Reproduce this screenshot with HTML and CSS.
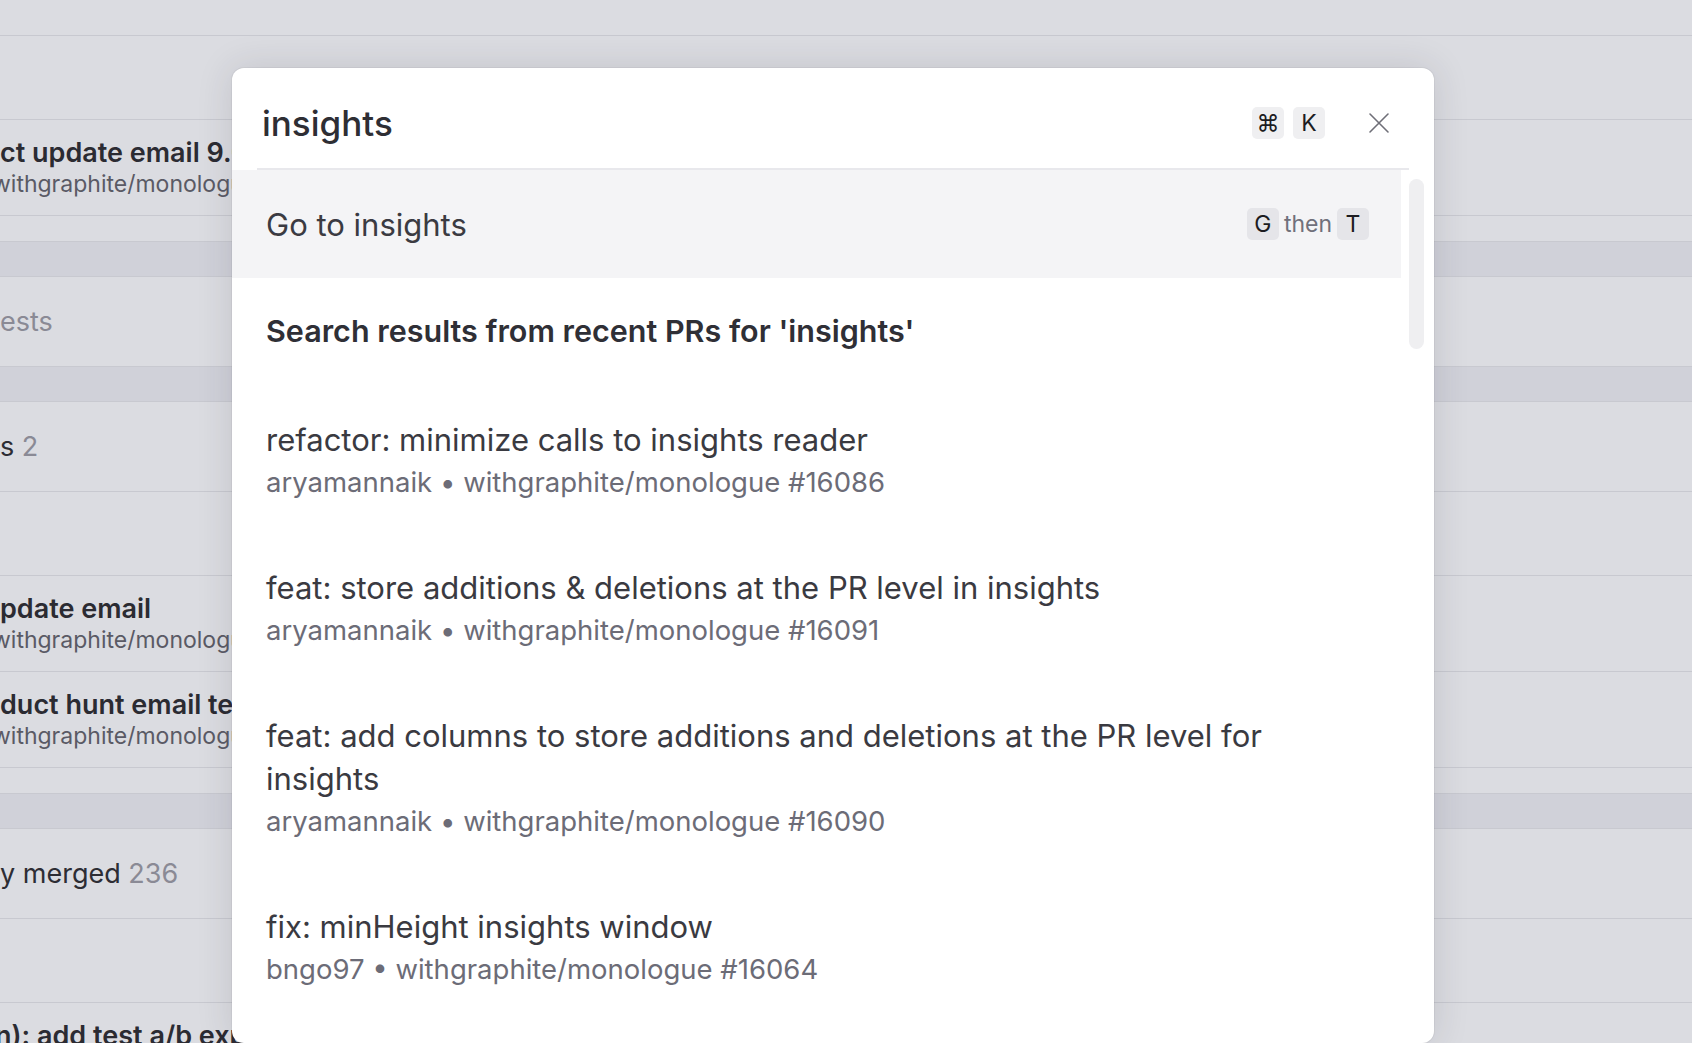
FILE: index.html
```html
<!DOCTYPE html>
<html lang="en">
<head>
    <meta charset="UTF-8">
    <meta name="viewport" content="width=device-width, initial-scale=1.0">
    <title>Inbox - Command menu</title>
    <link rel="stylesheet" href="styles.css">
</head>
<body>
    <!-- page behind the dimmed overlay -->
    <div class="page">
        <div class="bg-row bg-top"></div>
        <div class="bg-row bg-empty"></div>
        <div class="bg-row bg-pr">
            <span class="bg-title">ct update email 9.0</span>
            <span class="bg-sub cut">withgraphite/monologue</span>
        </div>
        <div class="bg-spacer"></div>
        <div class="bg-band"></div>
        <div class="bg-row bg-section"><span class="muted">ests</span></div>
        <div class="bg-band"></div>
        <div class="bg-row bg-section"><span>s <span class="muted">2</span></span></div>
        <div class="bg-row bg-empty"></div>
        <div class="bg-row bg-pr">
            <span class="bg-title">pdate email</span>
            <span class="bg-sub cut">withgraphite/monologue</span>
        </div>
        <div class="bg-row bg-pr">
            <span class="bg-title">duct hunt email test</span>
            <span class="bg-sub cut">withgraphite/monologue</span>
        </div>
        <div class="bg-spacer"></div>
        <div class="bg-band"></div>
        <div class="bg-row bg-section"><span>y merged <span class="muted">236</span></span></div>
        <div class="bg-row bg-empty"></div>
        <div class="bg-row bg-pr">
            <span class="bg-title cut-n">n): add test a/b experiment</span>
            <span class="bg-sub cut">withgraphite/monologue</span>
        </div>
    </div>

    <div class="overlay">
        <div class="cmdk">
            <div class="cmdk-head">
                <div class="cmdk-input">insights</div>
                <div class="keys">
                    <span class="kbd">&#8984;</span>
                    <span class="kbd">K</span>
                </div>
                <button class="close" aria-label="Close">
                    <svg width="22" height="22" viewBox="0 0 22 22" fill="none" stroke="#6f6f78" stroke-width="1.6" stroke-linecap="round">
                        <path d="M2 2 L20 20 M20 2 L2 20"/>
                    </svg>
                </button>
            </div>

            <div class="cmdk-body">
                <div class="cmdk-list">
                    <div class="cmdk-go">
                        <span>Go to insights</span>
                        <span class="shortcut">
                            <span class="kbd dark">G</span>
                            <span class="then">then</span>
                            <span class="kbd dark">T</span>
                        </span>
                    </div>

                    <div class="cmdk-group">Search results from recent PRs for 'insights'</div>

                    <div class="cmdk-item">
                        <div class="item-title">refactor: minimize calls to insights reader</div>
                        <div class="item-meta">aryamannaik &bull; withgraphite/monologue #16086</div>
                    </div>
                    <div class="cmdk-item">
                        <div class="item-title">feat: store additions &amp; deletions at the PR level in insights</div>
                        <div class="item-meta">aryamannaik &bull; withgraphite/monologue #16091</div>
                    </div>
                    <div class="cmdk-item">
                        <div class="item-title">feat: add columns to store additions and deletions at the PR level for insights</div>
                        <div class="item-meta">aryamannaik &bull; withgraphite/monologue #16090</div>
                    </div>
                    <div class="cmdk-item">
                        <div class="item-title">fix: minHeight insights window</div>
                        <div class="item-meta">bngo97 &bull; withgraphite/monologue #16064</div>
                    </div>
                </div>
                <div class="scroll-track">
                    <div class="scroll-thumb"></div>
                </div>
            </div>
        </div>
    </div>
</body>
</html>
```

FILE: styles.css
```css
body {
    font-family: Inter, "Noto Sans", sans-serif;
    margin: 0;
    padding: 0;
    background-color: #dbdce1;
    height: 1043px;
    overflow: hidden;
}

/* background page (already dimmed) */
.page {
    width: 100%;
}

.bg-row {
    box-sizing: border-box;
    border-bottom: 1px solid #c8c9d0;
    display: flex;
    flex-direction: column;
    justify-content: center;
    white-space: nowrap;
    overflow: hidden;
}

.bg-top { height: 36px; }
.bg-empty { height: 84px; }
.bg-pr { height: 96px; }
.bg-section {
    height: 90px;
    font-size: 27px;
    color: #2d2d34;
}

.bg-spacer {
    height: 25px;
    border-bottom: 1px solid #c8c9d0;
}

.bg-band {
    box-sizing: border-box;
    height: 35px;
    background-color: #d0d1d9;
    border-bottom: 1px solid #c8c9d0;
}

.bg-title {
    font-size: 27px;
    font-weight: 600;
    color: #2b2b32;
    line-height: 32px;
}

.bg-sub {
    font-size: 23px;
    color: #5a5a65;
    line-height: 30px;
}

.bg-sub.cut { margin-left: -8px; }
.bg-title.cut-n { margin-left: -5px; }

.muted { color: #8a8a95; }

/* command menu */
.overlay {
    position: absolute;
    top: 0;
    left: 0;
    right: 0;
    bottom: 0;
    overflow: hidden;
}

.cmdk {
    position: absolute;
    left: 232px;
    top: 68px;
    width: 1202px;
    height: 975px;
    background-color: #ffffff;
    border-radius: 12px;
    box-shadow: 0 0 36px rgba(40, 40, 60, 0.14), 0 0 0 1px rgba(0, 0, 0, 0.04);
    display: flex;
    flex-direction: column;
    overflow: hidden;
}

.cmdk-head {
    box-sizing: border-box;
    height: 102px;
    margin: 0 25px;
    padding: 10px 16px 0 5px;
    border-bottom: 2px solid #e8e8ec;
    display: flex;
    align-items: center;
}

.cmdk-input {
    flex: 1;
    font-size: 35px;
    font-weight: 500;
    color: #2e2e34;
}

.keys {
    display: flex;
    gap: 9px;
    margin-right: 40px;
}

.kbd {
    display: inline-flex;
    align-items: center;
    justify-content: center;
    width: 32px;
    height: 32px;
    border-radius: 5px;
    background-color: #efeff1;
    font-size: 23px;
    color: #1c1c21;
}

.kbd.dark { background-color: #e5e5e9; }

.close {
    width: 28px;
    height: 28px;
    padding: 0;
    border: none;
    background: none;
    display: flex;
    align-items: center;
    justify-content: center;
    cursor: pointer;
}

.cmdk-body {
    flex: 1;
    display: flex;
    min-height: 0;
}

.cmdk-list {
    flex: 1;
    overflow: hidden;
}

.cmdk-go {
    height: 108px;
    padding: 0 32px 0 34px;
    background-color: #f4f4f6;
    display: flex;
    align-items: center;
    justify-content: space-between;
    font-size: 31px;
    color: #3b3b42;
}

.shortcut {
    display: flex;
    align-items: center;
    gap: 5px;
}

.then {
    font-size: 23px;
    color: #70707b;
}

.cmdk-group {
    padding: 31px 34px 35px;
    font-size: 30.5px;
    line-height: 43px;
    font-weight: 600;
    color: #2f2f36;
}

.cmdk-item {
    padding: 31px 34px;
    font-size: 31px;
    line-height: 43px;
}

.item-title {
    color: #3a3a41;
}

.item-meta {
    color: #6c6c77;
    font-size: 27.5px;
}

.scroll-track {
    width: 33px;
    padding-top: 9px;
}

.scroll-thumb {
    width: 15px;
    height: 170px;
    margin-left: 8px;
    border-radius: 8px;
    background-color: #efeff1;
}
```
